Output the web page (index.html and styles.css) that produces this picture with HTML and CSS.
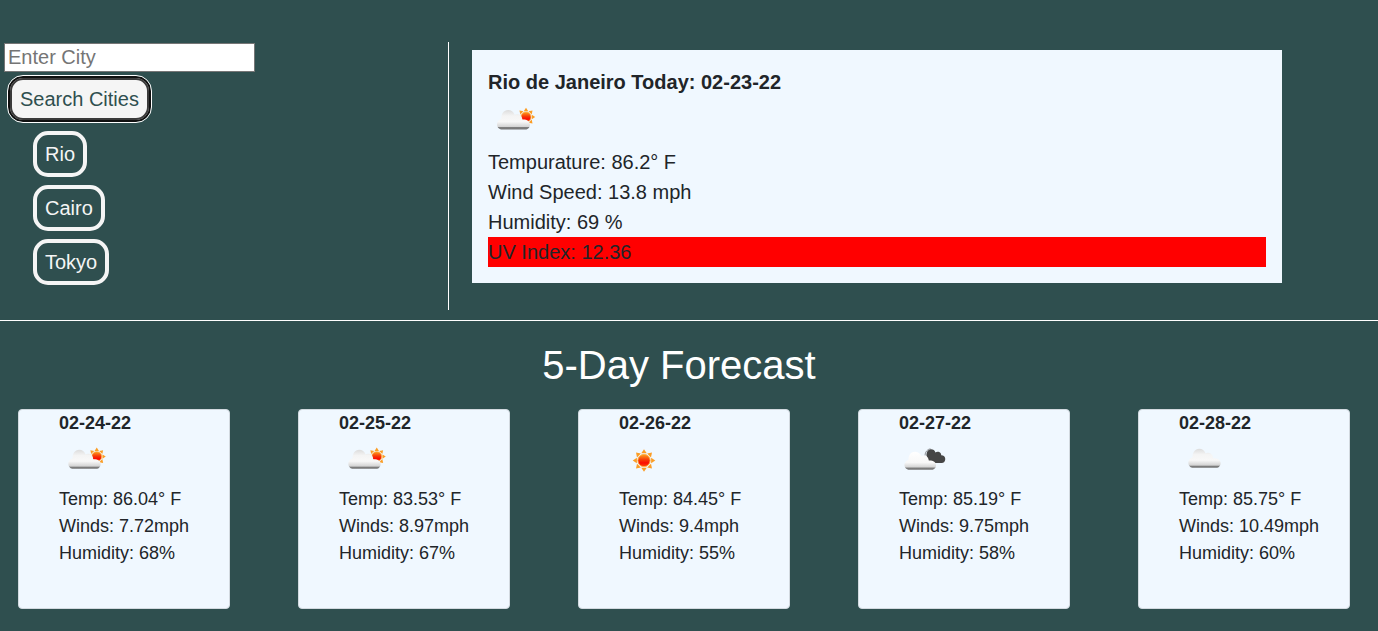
FILE: index.html
```html
<!DOCTYPE html>
<html lang="en">
<head>
<meta charset="utf-8">
<title>Weather Dashboard</title>
<link rel="stylesheet" href="styles.css">
</head>
<body>
<svg class="defs" aria-hidden="true">
  <defs>
    <linearGradient id="cloudFill" x1="0" y1="0" x2="0" y2="1">
      <stop offset="0" stop-color="#dcdcdc"/>
      <stop offset=".3" stop-color="#f4f4f4"/>
      <stop offset=".6" stop-color="#f8f8f8"/>
      <stop offset=".87" stop-color="#d2d2d2"/>
      <stop offset=".89" stop-color="#808080"/>
      <stop offset="1" stop-color="#757575"/>
    </linearGradient>
    <linearGradient id="whiteFill" x1="0" y1="0" x2="0" y2="1">
      <stop offset="0" stop-color="#fff"/>
      <stop offset=".6" stop-color="#f8f8f8"/>
      <stop offset=".87" stop-color="#d2d2d2"/>
      <stop offset=".89" stop-color="#808080"/>
      <stop offset="1" stop-color="#757575"/>
    </linearGradient>
    <linearGradient id="sunFill" x1="0" y1="0" x2="0" y2="1">
      <stop offset="0" stop-color="#ffa21f"/>
      <stop offset=".45" stop-color="#f63a08"/>
      <stop offset=".7" stop-color="#fb0d02"/>
      <stop offset="1" stop-color="#ff4a08"/>
    </linearGradient>
    <g id="sun">
      <g fill="#fb9d25">
        <path id="ray" d="M-2.8 -7.3L0 -11.5L2.8 -7.3Z"/>
        <use href="#ray" transform="rotate(45)"/>
        <use href="#ray" transform="rotate(90)"/>
        <use href="#ray" transform="rotate(135)"/>
        <use href="#ray" transform="rotate(180)"/>
        <use href="#ray" transform="rotate(225)"/>
        <use href="#ray" transform="rotate(270)"/>
        <use href="#ray" transform="rotate(315)"/>
      </g>
      <circle r="6.3" fill="url(#sunFill)" stroke="#ffb347" stroke-width="1"/>
    </g>
    <path id="cloud" d="M4 19.5C1.6 18.8 0 17 0 14.5C0 11.8 1.6 9.8 4.2 9C4.2 3.8 6.8 0 11 0C14.2 0 16.6 1.8 17.6 4.8C18.6 4.2 19.8 4 21 4.2C23.6 4.6 25.2 6.8 25.4 9.6C30 9.4 33 11.4 33 14.8C33 17 31.6 18.8 29.5 19.5Z"/>
    <symbol id="partly" viewBox="0 0 50 50">
      <use href="#sun" transform="translate(38 20) scale(.8)"/>
      <use href="#cloud" transform="translate(9 13)" fill="url(#cloudFill)"/>
    </symbol>
    <symbol id="clear" viewBox="0 0 50 50">
      <use href="#sun" transform="translate(25 24)"/>
    </symbol>
    <symbol id="cloudy" viewBox="0 0 50 50">
      <use href="#cloud" transform="translate(9 12)" fill="url(#cloudFill)"/>
    </symbol>
    <symbol id="broken" viewBox="0 0 50 50">
      <path d="M27.5 19C27.5 15 29.4 12.6 32.2 12.6C34.4 12.6 36 13.8 36.6 15.8C37.6 15 38.6 14.8 39.8 15C41.6 15.4 42.6 16.8 42.6 18.6C45.2 18.6 46.7 20 46.7 22.4C46.7 24.8 45.2 26.5 43 26.5H30Z" fill="#464646"/>
      <path d="M26 19C26.2 15.2 28.2 12.6 31.6 12" fill="none" stroke="#8d9094" stroke-width="1"/>
      <use href="#cloud" transform="translate(5 15) scale(.98 .94)" fill="url(#whiteFill)"/>
    </symbol>
  </defs>
</svg>

<main class="top">
  <aside class="search">
    <input class="city-input" type="text" placeholder="Enter City" aria-label="Enter City">
    <button class="btn btn-search" type="button">Search Cities</button>
    <ul class="history">
      <li><button class="btn" type="button">Rio</button></li>
      <li><button class="btn" type="button">Cairo</button></li>
      <li><button class="btn" type="button">Tokyo</button></li>
    </ul>
  </aside>
  <section class="today">
    <h2 class="today-title">Rio de Janeiro Today: 02-23-22</h2>
    <svg class="icon" role="img" aria-label="Partly cloudy"><use href="#partly"/></svg>
    <p>Tempurature: 86.2° F</p>
    <p>Wind Speed: 13.8 mph</p>
    <p>Humidity: 69 %</p>
    <p class="uv">UV Index: 12.36</p>
  </section>
</main>

<section class="forecast">
  <h1 class="forecast-title">5-Day Forecast</h1>
  <div class="days">
    <article class="day">
      <h3>02-24-22</h3>
      <svg class="icon" role="img" aria-label="Partly cloudy"><use href="#partly"/></svg>
      <p>Temp: 86.04° F</p><p>Winds: 7.72mph</p><p>Humidity: 68%</p>
    </article>
    <article class="day">
      <h3>02-25-22</h3>
      <svg class="icon" role="img" aria-label="Partly cloudy"><use href="#partly"/></svg>
      <p>Temp: 83.53° F</p><p>Winds: 8.97mph</p><p>Humidity: 67%</p>
    </article>
    <article class="day">
      <h3>02-26-22</h3>
      <svg class="icon" role="img" aria-label="Clear"><use href="#clear"/></svg>
      <p>Temp: 84.45° F</p><p>Winds: 9.4mph</p><p>Humidity: 55%</p>
    </article>
    <article class="day">
      <h3>02-27-22</h3>
      <svg class="icon" role="img" aria-label="Broken clouds"><use href="#broken"/></svg>
      <p>Temp: 85.19° F</p><p>Winds: 9.75mph</p><p>Humidity: 58%</p>
    </article>
    <article class="day">
      <h3>02-28-22</h3>
      <svg class="icon" role="img" aria-label="Cloudy"><use href="#cloudy"/></svg>
      <p>Temp: 85.75° F</p><p>Winds: 10.49mph</p><p>Humidity: 60%</p>
    </article>
  </div>
</section>
</body>
</html>
```
FILE: styles.css
```css
* {
  box-sizing: border-box;
}

body {
  margin: 0;
  background: #2f4f4f;
  color: #212529;
  font-family: "Liberation Sans", Arial, sans-serif;
  font-size: 20px;
  line-height: 30px;
}

h1, h2, h3, p, ul {
  margin: 0;
  padding: 0;
}

.defs {
  position: absolute;
  width: 0;
  height: 0;
}

.top {
  display: flex;
  padding: 42px 0 10px;
  border-bottom: 1px solid #fff;
}

.search {
  display: flex;
  flex-direction: column;
  align-items: flex-start;
  flex: 0 0 449px;
  padding: 1px 4px 25px;
  border-right: 1px solid #fff;
}

.city-input {
  width: 251px;
  height: 29px;
  padding: 0 3px 2px;
  border: 1px solid #767676;
  border-radius: 0;
  background: #fff;
  color: #212529;
  font: inherit;
}

.city-input::placeholder {
  color: #757575;
}

.btn {
  display: block;
  padding: 4px 8px;
  border: 4px solid #f5f5f5;
  border-radius: 15px;
  background: #2f4f4f;
  color: #f5f5f5;
  font: inherit;
}

.btn-search {
  margin: 4px 4px 9px;
  padding: 6px 10px;
  border: 2px solid #101010;
  outline: 1px solid #fff;
  box-shadow: inset 0 0 0 2px #3b3b3b;
  background: #f5f5f5;
  color: #2f4f4f;
}

.history {
  display: flex;
  flex-direction: column;
  gap: 8px;
  padding-left: 29px;
  list-style: none;
}

.today {
  flex: 1;
  align-self: flex-start;
  margin: 8px 96px 0 23px;
  padding: 17px 16px 16px;
  background: #f0f8ff;
}

.today-title {
  font-size: 20px;
  line-height: 30px;
}

.icon {
  display: block;
  width: 50px;
  height: 50px;
}

.uv {
  background: #f00;
}

.forecast-title {
  padding: 20px 20px 20px 0;
  color: #fff;
  font-size: 40px;
  font-weight: 400;
  line-height: 48px;
  text-align: center;
}

.days {
  display: flex;
  justify-content: space-between;
  padding: 0 28px 22px 18px;
}

.day {
  width: 212px;
  min-height: 200px;
  padding-left: 40px;
  border: 1px solid #d2d9df;
  border-radius: 4px;
  background: #f0f8ff;
  font-size: 18px;
  line-height: 27px;
}

.day h3 {
  font-size: 18px;
  line-height: 27px;
}

.day .icon {
  height: 49px;
}
```
